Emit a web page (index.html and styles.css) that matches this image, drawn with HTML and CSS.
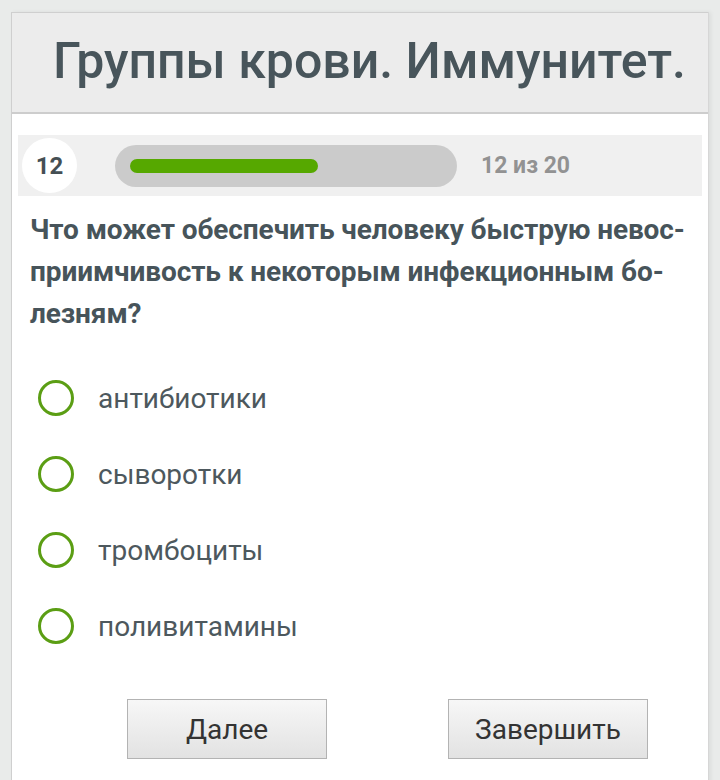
FILE: index.html
```html
<!DOCTYPE html>
<html lang="ru">
<head>
<meta charset="utf-8">
<link rel="stylesheet" href="styles.css">
</head>
<body>
<div class="page">
  <div class="card">
    <header class="head">
      <h1 class="title">Группы крови. Иммунитет.</h1>
    </header>
    <div class="body">
      <div class="progress">
        <div class="num">12</div>
        <div class="track"><div class="fill" style="width:188px"></div></div>
        <div class="count">12 из 20</div>
      </div>
      <p class="question">Что может обеспечить человеку быструю невос-<br>приимчивость к некоторым инфекционным бо-<br>лезням?</p>
      <ul class="options">
        <li class="opt"><span class="radio"></span><span class="label">антибиотики</span></li>
        <li class="opt"><span class="radio"></span><span class="label">сыворотки</span></li>
        <li class="opt"><span class="radio"></span><span class="label">тромбоциты</span></li>
        <li class="opt"><span class="radio"></span><span class="label">поливитамины</span></li>
      </ul>
      <div class="buttons">
        <button class="btn">Далее</button>
        <button class="btn">Завершить</button>
      </div>
    </div>
  </div>
</div>
</body>
</html>
```

FILE: styles.css
```css
html, body {
  margin: 0;
  padding: 0;
}
body {
  background: #e9ebea;
  font-family: Roboto, "Liberation Sans", sans-serif;
  width: 720px;
  height: 780px;
  overflow: hidden;
}
.page {
  padding: 12px 0 0 11px;
}
.card {
  width: 696px;
  background: #fff;
  border-left: 1px solid #cfcfcf;
  border-right: 1px solid #d6d6d6;
  box-shadow: 2px 0 4px rgba(0,0,0,0.06);
  height: 800px;
}
.head {
  height: 99px;
  background: #ececec;
  border-top: 1px solid #cfcfcf;
  border-bottom: 2px solid #cdcdcd;
  display: flex;
  align-items: center;
  padding-left: 41px;
}
.title {
  margin: 0;
  font-family: Roboto, sans-serif;
  font-weight: 500;
  font-size: 50px;
  letter-spacing: 0;
  color: #48555b;
  white-space: nowrap;
  position: relative;
  top: -2px;
}
.body {
  padding: 21px 6px 0 6px;
}
.progress {
  height: 61px;
  background: #f0f0f0;
  display: flex;
  align-items: center;
  padding-left: 4px;
}
.num {
  width: 55px;
  height: 55px;
  border-radius: 50%;
  background: #fff;
  display: flex;
  align-items: center;
  justify-content: center;
  font-weight: 700;
  font-size: 24px;
  color: #454f54;
}
.track {
  margin-left: 38px;
  width: 342px;
  height: 42px;
  border-radius: 21px;
  background: #cbcbcb;
  display: flex;
  align-items: center;
  padding-left: 15px;
  box-sizing: border-box;
}
.fill {
  height: 14px;
  border-radius: 7px;
  background: #56a800;
}
.count {
  margin-left: 24px;
  font-weight: 700;
  font-size: 23px;
  color: #929292;
}
.question {
  margin: 13px 0 0 0;
  padding-left: 12px;
  font-family: Roboto, sans-serif;
  font-weight: 700;
  font-size: 28px;
  letter-spacing: -0.1px;
  line-height: 42px;
  color: #47545a;
  white-space: nowrap;
}
.options {
  list-style: none;
  margin: 25px 0 0 0;
  padding: 0 0 0 20px;
}
.opt {
  height: 76px;
  display: flex;
  align-items: center;
}
.radio {
  width: 30px;
  height: 30px;
  border: 3px solid #5b9e14;
  border-radius: 50%;
  flex: none;
}
.label {
  margin-left: 24px;
  font-size: 28px;
  color: #4d585d;
}
.buttons {
  display: flex;
  gap: 121px;
  padding-left: 109px;
  margin-top: 35px;
}
.btn {
  width: 200px;
  height: 60px;
  border: 1px solid #b3b3b3;
  background: linear-gradient(#f7f7f7, #e2e2e2);
  font-family: Roboto, sans-serif;
  font-size: 28px;
  color: #333;
  padding: 0;
}
```
